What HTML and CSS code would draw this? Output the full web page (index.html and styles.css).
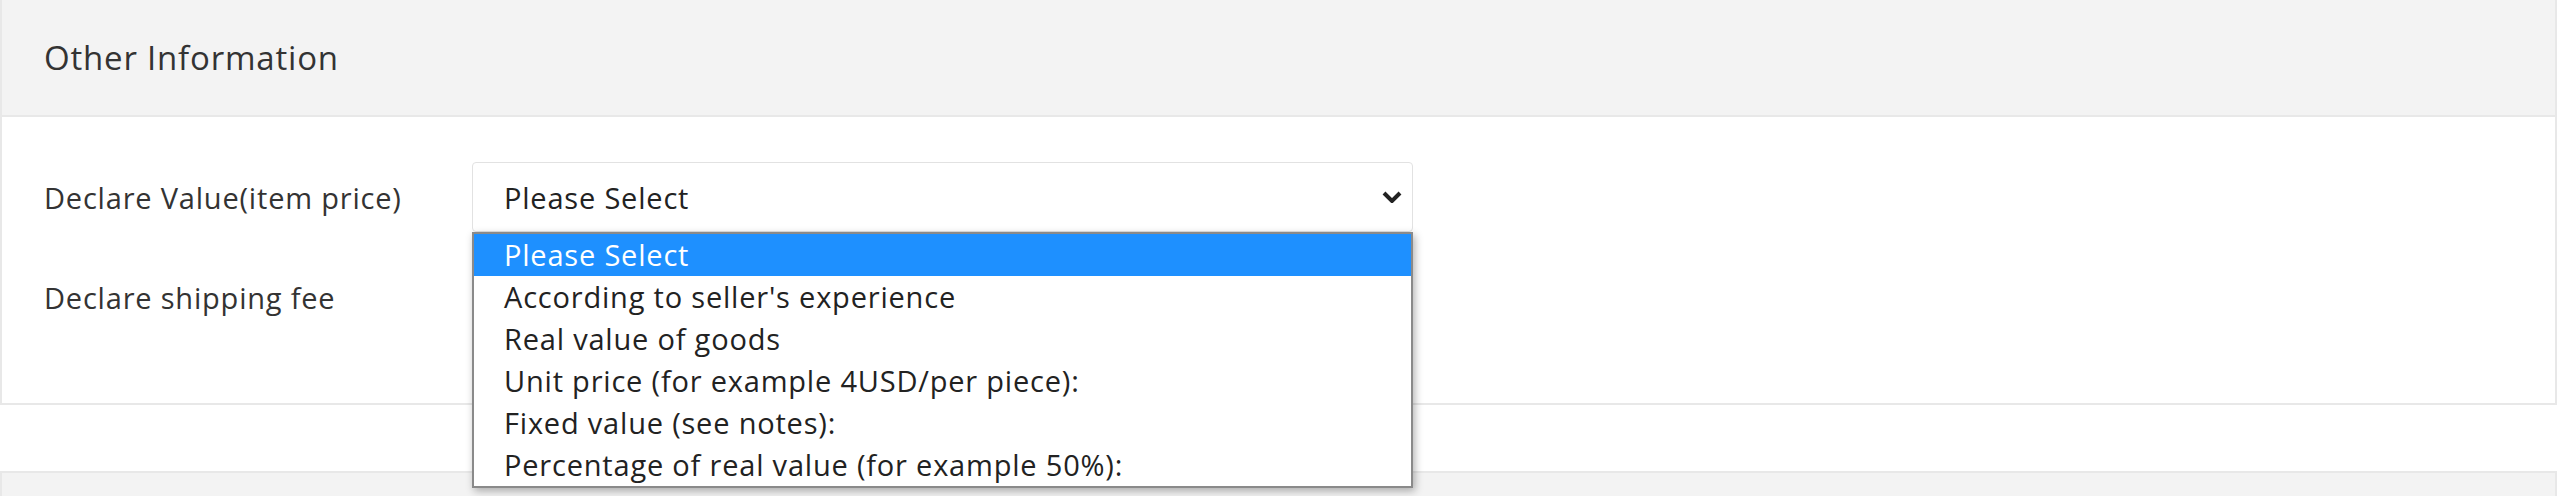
FILE: index.html
```html
<!DOCTYPE html>
<html lang="en">
<head>
  <meta charset="UTF-8" />
  <meta name="viewport" content="width=device-width, initial-scale=1.0"/>
  <title>Other Information</title>
  <link rel="stylesheet" href="styles.css">
</head>
<body>

  <div class="page">
    <div class="panel">
      <div class="panel-heading">Other Information</div>
      <div class="panel-body">
        <div class="form-row">
          <label class="form-label">Declare Value(item price)</label>
          <div class="select-wrap">
            <div class="select-box">
              <span>Please Select</span>
              <svg class="chevron" width="20" height="12" viewBox="0 0 20 12">
                <polyline points="2,2 10,10 18,2" fill="none" stroke="#222" stroke-width="4" stroke-linejoin="miter"/>
              </svg>
            </div>
            <ul class="dropdown">
              <li class="selected">Please Select</li>
              <li>According to seller's experience</li>
              <li>Real value of goods</li>
              <li>Unit price (for example 4USD/per piece):</li>
              <li>Fixed value (see notes):</li>
              <li>Percentage of real value (for example 50%):</li>
            </ul>
          </div>
        </div>
        <div class="form-row">
          <label class="form-label">Declare shipping fee</label>
          <div class="input-box"></div>
        </div>
      </div>
    </div>

    <div class="panel">
      <div class="panel-heading"></div>
    </div>
  </div>

</body>
</html>
```

FILE: styles.css
```css
body {
  margin: 0;
  padding: 0 3px 0 0;
  font-family: "Open Sans", "Noto Sans", sans-serif;
  color: #333;
  background: #fff;
  overflow: hidden;
}
.page {
  margin-top: -2px;
}
.panel {
  border: 2px solid #e8e8e8;
  margin-bottom: 66px;
}
.panel-heading {
  background-color: #f3f3f3;
  height: 117px;
  box-sizing: border-box;
  padding-left: 42px;
  display: flex;
  align-items: center;
  font-size: 33px;
  letter-spacing: 0.8px;
  color: #333;
  border-bottom: 2px solid #e8e8e8;
}
.panel-body {
  padding: 45px 0 71px 0;
}
.form-row {
  display: flex;
  align-items: center;
  margin-bottom: 30px;
}
.form-row:last-child {
  margin-bottom: 0;
}
.form-label {
  width: 470px;
  box-sizing: border-box;
  padding-left: 42px;
  font-size: 29px;
  letter-spacing: 0.8px;
  color: #333;
}
.select-wrap {
  position: relative;
  width: 941px;
}
.select-box {
  height: 70px;
  box-sizing: border-box;
  border: 1px solid #e2e2e2;
  border-radius: 4px;
  display: flex;
  align-items: center;
  justify-content: space-between;
  padding: 0 10px 0 31px;
  font-size: 29px;
  letter-spacing: 0.8px;
  color: #222;
}
.input-box {
  width: 941px;
  height: 70px;
  box-sizing: border-box;
  border: 1px solid #e2e2e2;
  border-radius: 4px;
}
.dropdown {
  position: absolute;
  top: 100%;
  left: 0;
  width: 100%;
  box-sizing: border-box;
  margin: 0;
  padding: 0;
  list-style: none;
  background: #fff;
  border: 2px solid #8a8a8a;
  box-shadow: 2px 3px 8px rgba(0, 0, 0, 0.3);
  font-size: 29px;
  letter-spacing: 0.8px;
  color: #222;
  z-index: 10;
}
.dropdown li {
  height: 42px;
  line-height: 42px;
  padding-left: 30px;
}
.dropdown li.selected {
  background-color: #1e90ff;
  color: #fff;
}
```
